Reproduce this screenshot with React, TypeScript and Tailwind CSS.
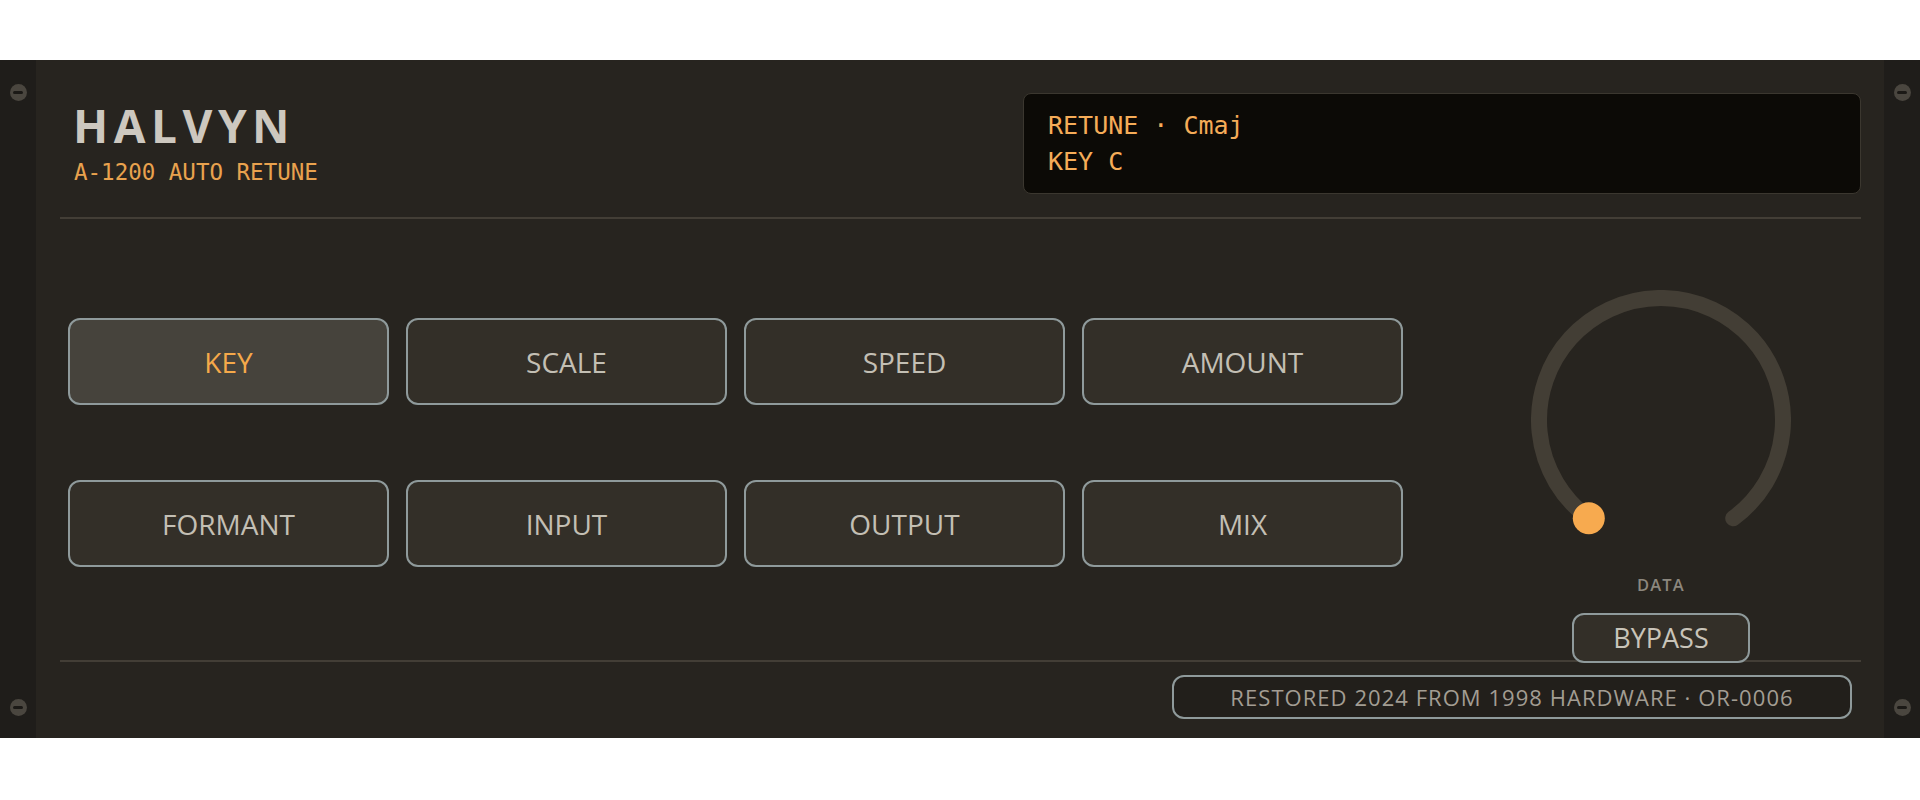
import { useState } from "react";

const keys = ["KEY", "SCALE", "SPEED", "AMOUNT", "FORMANT", "INPUT", "OUTPUT", "MIX"];

const Screw = () => (
    <div className="w-[17px] h-[17px] rounded-full bg-[#4a463f] flex items-center justify-center">
        <div className="w-[10px] h-[3px] rounded-sm bg-[#1b1916]" />
    </div>
);

const Ear = () => (
    <div className="w-[36px] bg-[#1f1d1a] flex flex-col items-center justify-between pt-[24px] pb-[22px]">
        <Screw />
        <Screw />
    </div>
);

const Knob = () => (
    <svg width="260" height="260" viewBox="0 0 260 260" className="shrink-0">
        <path
            d="M 57.8 228.3 A 122 122 0 1 1 202.2 228.3"
            fill="none"
            stroke="#433e35"
            strokeWidth="16"
            strokeLinecap="round"
        />
        <circle cx="57.8" cy="228.3" r="16" fill="#f7aa4f" />
    </svg>
);

export default function App() {
    const [active, setActive] = useState("KEY");

    return (
        <div className="w-[1920px] h-[800px] bg-white pt-[60px]">
            <div className="h-[678px] flex bg-[#27241f]">
                <Ear />
                <div className="flex-1 flex flex-col pl-[24px] pr-[23px]">
                    {/* header */}
                    <div className="h-[157px] flex justify-between items-start pt-[33px]">
                        <div className="ml-[13px] pt-[9px]">
                            <div className="text-[46px] leading-none font-bold tracking-[0.12em] text-[#cdc8bf] font-['Open_Sans',sans-serif]">
                                HALVYN
                            </div>
                            <div className="mt-[11px] ml-[1px] text-[22.5px] leading-[1.2] text-[#e9a24e] font-['DejaVu_Sans_Mono',monospace]">
                                A-1200 AUTO RETUNE
                            </div>
                        </div>
                        <div className="w-[838px] h-[101px] rounded-lg border border-[#3b372f] bg-[#0c0a06] px-[24px] pt-[14px] text-[25px] leading-[36px] text-[#f5ac58] font-['DejaVu_Sans_Mono',monospace]">
                            <div>RETUNE · Cmaj</div>
                            <div>KEY C</div>
                        </div>
                    </div>
                    <div className="h-[2px] bg-[#433e36]" />

                    {/* controls */}
                    <div className="h-[441px] flex justify-between">
                        <div className="ml-[8px] mt-[99px] grid grid-cols-[repeat(4,321px)] auto-rows-[87px] gap-x-[17px] gap-y-[75px] h-fit">
                            {keys.map((k) => (
                                <button
                                    key={k}
                                    onClick={() => setActive(k)}
                                    className={
                                        k === active
                                            ? "rounded-xl border-2 border-[#8f9a9b] bg-[#46433c] text-[#f5a94a] text-[28px] font-medium font-['Open_Sans',sans-serif]"
                                            : "rounded-xl border-2 border-[#8f9a9b] bg-[#332f28] text-[#c3bfb4] text-[28px] font-medium font-['Open_Sans',sans-serif]"
                                    }
                                >
                                    {k}
                                </button>
                            ))}
                        </div>
                        <div className="w-[260px] mr-[70px] pt-[71px] flex flex-col items-center">
                            <Knob />
                            <div className="shrink-0 mt-[25px] text-[16.5px] leading-[20px] font-semibold tracking-[0.07em] text-[#8c877e] font-['Open_Sans',sans-serif]">
                                DATA
                            </div>
                            <button className="relative z-10 mt-[18px] w-[178px] h-[50px] shrink-0 rounded-xl border-2 border-[#8f9a9b] bg-[#332f28] text-[27px] font-medium text-[#c9c4b9] font-['Open_Sans',sans-serif]">
                                BYPASS
                            </button>
                        </div>
                    </div>
                    <div className="h-[2px] bg-[#433e36]" />

                    {/* footer */}
                    <div className="flex justify-end pt-[13px] pr-[9px]">
                        <div className="w-[680px] h-[44px] rounded-xl border-2 border-[#8f9a9b] bg-[#221f1b] flex items-center justify-center text-[22px] font-medium tracking-[1.05px] text-[#a29d93] font-['Open_Sans',sans-serif]">
                            RESTORED 2024 FROM 1998 HARDWARE · OR-0006
                        </div>
                    </div>
                </div>
                <Ear />
            </div>
        </div>
    );
}
